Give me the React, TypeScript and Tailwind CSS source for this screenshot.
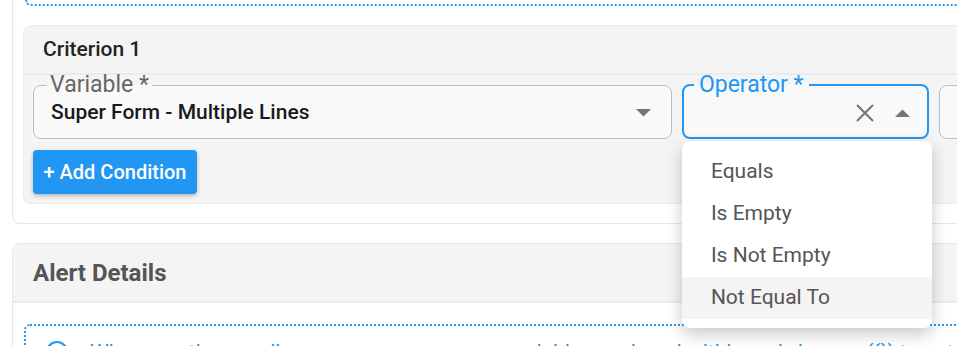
import React from 'react';
import { Info } from 'lucide-react';

const operators = ['Equals', 'Is Empty', 'Is Not Empty', 'Not Equal To'];

const CaretDown = () => (
  <svg width="15" height="8" viewBox="0 0 15 8">
    <polygon points="0,0 15,0 7.5,7.5" fill="#757575" />
  </svg>
);

const CaretUp = () => (
  <svg width="15" height="8" viewBox="0 0 15 8">
    <polygon points="0,8 15,8 7.5,0.5" fill="#757575" />
  </svg>
);

const ClearIcon = () => (
  <svg width="18" height="18" viewBox="0 0 18 18">
    <path d="M1 1 L17 17 M17 1 L1 17" stroke="#757575" strokeWidth="2" fill="none" />
  </svg>
);

const App: React.FC = () => {
  return (
    <div className="w-[957px] h-[346px] overflow-hidden bg-white font-['Roboto',sans-serif]">
      <div className="w-[1200px] pl-[12px]">
        {/* criteria card */}
        <div className="border border-t-0 border-[#e6e6e6] rounded-b-lg px-[10px] pb-[19px]">
          <div className="ml-[2px] h-[6px] border-2 border-t-0 border-dotted border-[#2196f3] rounded-b-md" />
          <div className="mt-[19px] rounded-lg bg-[#f4f4f4] border border-[#ebebeb]">
            <div className="h-[49px] px-[19px] flex items-center text-[21px] font-medium text-[#222] border-b-2 border-[#ebebeb]">
              Criterion 1
            </div>
            <div className="px-[9px] pb-[9px]">
              <div className="flex gap-[10px]">
                <fieldset className="w-[640px] border border-[#bdbdbd] rounded-lg bg-[#f9f9f9] pl-[13px] pr-[20px]">
                  <legend className="px-[3px] text-[23px] leading-[20px] text-[#666]">Variable *</legend>
                  <div className="h-[36px] mb-[7px] flex items-center justify-between">
                    <span className="pl-[4px] text-[21px] font-medium text-[#1a1a1a]">Super Form - Multiple Lines</span>
                    <CaretDown />
                  </div>
                </fieldset>
                <div className="relative w-[248px]">
                  <fieldset className="h-full border-2 border-[#2196f3] rounded-lg bg-[#f9f9f9] pl-[10px] pr-[17px]">
                    <legend className="px-[5px] text-[23px] leading-[20px] text-[#2196f3]">Operator *</legend>
                    <div className="h-[36px] mb-[5px] flex items-center justify-end gap-[21px]">
                      <ClearIcon />
                      <CaretUp />
                    </div>
                  </fieldset>
                  <div className="absolute left-0 top-full mt-[2px] w-[250px] bg-white rounded-lg shadow-[0_6px_16px_rgba(0,0,0,0.22)] pt-[10px] pb-[9px] z-10">
                    {operators.map((op, i) => (
                      <div
                        key={op}
                        className={`h-[42px] pl-[29px] flex items-center text-[21px] text-[#555] ${
                          i === 3 ? 'bg-[#f4f4f4]' : ''
                        }`}
                      >
                        {op}
                      </div>
                    ))}
                  </div>
                </div>
                <div className="w-[240px] h-[54px] mt-[10px] border border-[#bdbdbd] rounded-lg bg-[#f9f9f9]" />
              </div>
              <button className="mt-[11px] h-[44px] w-[164px] rounded-[4px] bg-[#2196f3] text-white text-[20px] font-medium shadow-[0_2px_4px_rgba(0,0,0,0.25)]">
                + Add Condition
              </button>
            </div>
          </div>
        </div>

        {/* alert details */}
        <div className="mt-[19px] border border-[#e6e6e6] rounded-lg overflow-hidden">
          <div className="h-[59px] px-[20px] flex items-center bg-[#f4f4f4] border-b-2 border-[#ebebeb] text-[24px] font-bold text-[#555]">
            Alert Details
          </div>
          <div className="pt-[21px] px-[11px]">
            <div className="border-2 border-dotted border-[#2196f3] rounded-md pl-[19px] pt-[12px] pb-[12px] flex items-start gap-[21px] text-[21px] leading-[28px] text-[#2196f3] whitespace-nowrap">
              <Info size={24} strokeWidth={2} className="mt-[2px] shrink-0" />
              <span>When creating email messages, you can use variables enclosed within curly braces ({'{}'}) to get and format values</span>
            </div>
          </div>
        </div>
      </div>
    </div>
  );
};

export default App;
